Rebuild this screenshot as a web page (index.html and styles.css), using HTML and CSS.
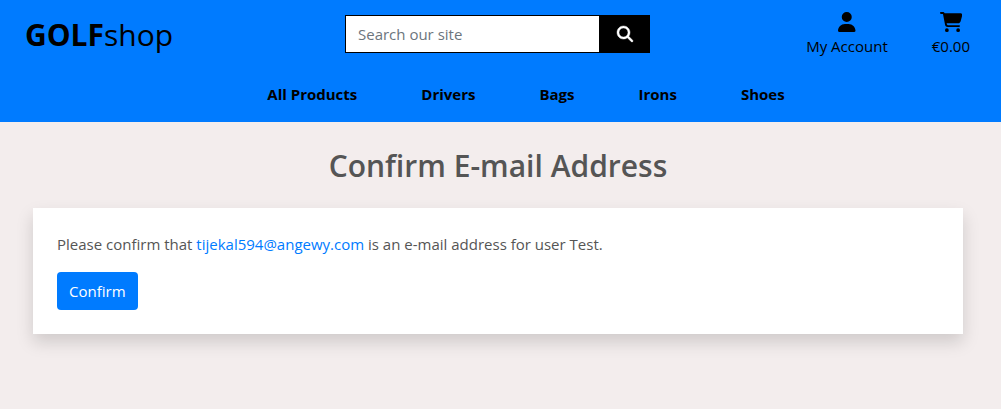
FILE: index.html
```html
<!DOCTYPE html>
<html lang="en">
<head>
<meta charset="utf-8">
<meta name="viewport" content="width=device-width, initial-scale=1">
<title>GOLFshop</title>
<link rel="stylesheet" href="styles.css">
</head>
<body>
<header class="site-header">
  <div class="top-bar">
    <a class="logo" href="#"><strong>GOLF</strong>shop</a>
    <form class="search">
      <input class="search-input" type="text" placeholder="Search our site" aria-label="Search our site">
      <button class="search-button" type="submit" aria-label="Search">
        <svg class="search-icon" viewBox="0 0 512 512" aria-hidden="true"><path fill="currentColor" stroke="currentColor" stroke-width="14" d="M416 208c0 45.900-14.900 88.300-40 122.700L502.600 457.400c12.500 12.500 12.500 32.800 0 45.300s-32.800 12.500-45.300 0L330.700 376c-34.400 25.200-76.800 40-122.700 40C93.100 416 0 322.900 0 208S93.100 0 208 0S416 93.100 416 208zM208 352a144 144 0 1 0 0-288 144 144 0 1 0 0 288z"/></svg>
      </button>
    </form>
    <div class="actions">
      <a class="action" href="#">
        <svg class="action-icon" viewBox="0 0 448 512" aria-hidden="true"><path fill="currentColor" d="M224 256A128 128 0 1 0 224 0a128 128 0 1 0 0 256zm-45.700 48C79.800 304 0 383.800 0 482.300C0 498.700 13.300 512 29.700 512H418.300c16.400 0 29.700-13.300 29.700-29.700C448 383.800 368.200 304 269.700 304H178.300z"/></svg>
        <span>My Account</span>
      </a>
      <a class="action" href="#">
        <svg class="action-icon" viewBox="0 0 576 512" aria-hidden="true"><path fill="currentColor" d="M0 24C0 10.700 10.700 0 24 0H69.500c22 0 41.500 12.800 50.600 32h411c26.300 0 45.500 25 38.600 50.400l-41 152.300c-8.500 31.400-37 53.300-69.500 53.300H170.700l5.400 28.500c2.200 11.300 12.100 19.500 23.600 19.500H488c13.300 0 24 10.700 24 24s-10.700 24-24 24H199.700c-34.600 0-64.300-24.600-70.700-58.500L77.400 54.500c-.7-3.800-4-6.500-7.900-6.500H24C10.700 48 0 37.300 0 24zM128 464a48 48 0 1 1 96 0 48 48 0 1 1-96 0zm336-48a48 48 0 1 1 0 96 48 48 0 1 1 0-96z"/></svg>
        <span>€0.00</span>
      </a>
    </div>
  </div>
  <nav class="main-nav">
    <a class="nav-link" href="#">All Products</a>
    <a class="nav-link" href="#">Drivers</a>
    <a class="nav-link" href="#">Bags</a>
    <a class="nav-link" href="#">Irons</a>
    <a class="nav-link" href="#">Shoes</a>
  </nav>
</header>
<main class="content">
  <h1 class="title">Confirm E-mail Address</h1>
  <section class="card">
    <p class="message">Please confirm that <a class="email" href="mailto:tijekal594@angewy.com">tijekal594@angewy.com</a> is an e-mail address for user Test.</p>
    <form>
      <button class="confirm-button" type="submit">Confirm</button>
    </form>
  </section>
</main>
</body>
</html>
```

FILE: styles.css
```css
* {
  box-sizing: border-box;
}

body {
  margin: 0;
  background: #f3eded;
  color: #555;
  font: 400 15px/24px "Segoe UI", "Open Sans", "Noto Sans", sans-serif;
}

a {
  color: #007bff;
  text-decoration: none;
}

input,
button {
  font: inherit;
}

.site-header {
  background: #007bff;
  padding-bottom: 16px;
}

.top-bar {
  display: grid;
  grid-template-columns: 1fr 305px 1fr;
  padding: 11px 31px 0 25px;
}

.logo {
  color: #000;
  font-size: 30px;
  line-height: 48px;
}

.search {
  display: flex;
  height: 38px;
  margin-top: 4px;
}

.search-input {
  flex: 1;
  min-width: 0;
  padding: 6px 12px;
  border: 1px solid #000;
  border-radius: 0;
  background: #fff;
  color: #495057;
}

.search-input::placeholder {
  color: #6c757d;
  opacity: 1;
}

.search-button {
  display: grid;
  place-items: center;
  width: 50px;
  padding: 0;
  border: 0;
  background: #000;
  color: #fff;
}

.search-icon {
  width: 16px;
  height: 16px;
  overflow: visible;
}

.actions {
  display: flex;
  justify-content: flex-end;
  align-items: flex-start;
  gap: 44px;
}

.action {
  display: flex;
  flex-direction: column;
  align-items: center;
  padding-top: 1px;
  color: #000;
}

.action-icon {
  height: 20px;
  margin-bottom: 2px;
}

.main-nav {
  display: flex;
  justify-content: center;
  gap: 64px;
  padding: 23px 0 0 51px;
}

.nav-link {
  color: #000;
  font-weight: 700;
}

.content {
  padding: 24px 38px 48px 33px;
}

.title {
  margin: 0 0 22px;
  font-size: 30px;
  font-weight: 600;
  line-height: 40px;
  text-align: center;
}

.card {
  padding: 24px;
  background: #fff;
  box-shadow: 0 8px 16px rgba(0, 0, 0, 0.15);
}

.message {
  margin: 0 0 16px;
}

.confirm-button {
  padding: 6px 12px;
  border: 0;
  border-radius: 4px;
  background: #007bff;
  color: #fff;
  line-height: 26px;
}
```
